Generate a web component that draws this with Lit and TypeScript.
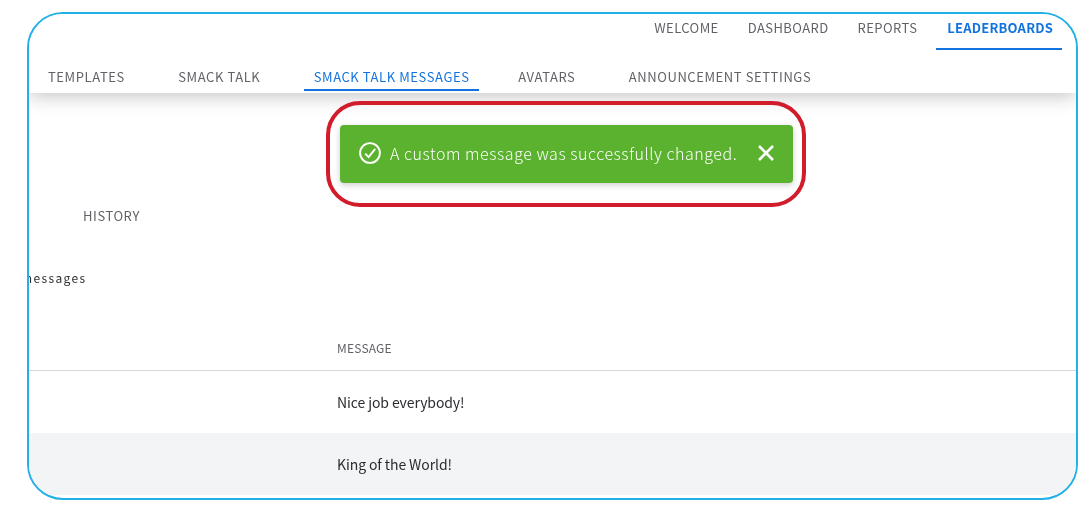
import { LitElement, html, css } from "lit";
import { customElement } from "lit/decorators.js";

@customElement("app-root")
export class AppRoot extends LitElement {
  static styles = css`
    :host { display: block; width: 1089px; height: 512px; background: #fff; overflow: hidden;
      font-family: "Noto Sans CJK SC", "Liberation Sans", sans-serif; padding: 12px 0 0 27px; box-sizing: border-box; }
    .frame { position: relative; width: 1051px; height: 488px; box-sizing: border-box; border: 2px solid #22b0e6;
      border-radius: 36px; overflow: hidden; background: #fff; display: flex; flex-direction: column; }
    header { position: relative; z-index: 1; height: 79px; flex: none; background: #fff; box-shadow: 0 3px 18px rgba(0,0,0,.24); display: flex; flex-direction: column; }
    .nav { display: flex; font-size: 13px; letter-spacing: .58px; color: #616267; white-space: nowrap; will-change: transform; }
    .top { justify-content: flex-end; height: 36px; padding-right: 14px; letter-spacing: .42px; }
    .top a { box-sizing: border-box; height: 36px; line-height: 18px; padding-top: 5px; margin-left: 29px; }
    .top a.on { color: #1273de; font-weight: 700; letter-spacing: .2px; border-bottom: 2px solid #1273de; padding: 5px 9px 0 11px; margin-left: 19px; }
    .sub { margin-top: 13px; padding-left: 9px; gap: 34.4px; }
    .sub a { padding: 0 9px 0 10px; height: 28px; box-sizing: border-box; line-height: 28px; }
    .sub a.on { color: #1273de; border-bottom: 2px solid #1273de; margin-right: -4.6px; }
    .body { flex: 1; display: flex; flex-direction: column; min-height: 0; will-change: transform; }
    .history { font-size: 13px; letter-spacing: .56px; color: #616267; margin: 114px 0 0 54px; line-height: 18px; height: 18px; }
    .messages { font-size: 12px; letter-spacing: 1.35px; color: #2e2f33; line-height: 18px; margin: 44px 0 0 -8px; height: 18px; }
    .th { font-size: 12px; letter-spacing: .2px; color: #616267; padding-left: 308px; margin-top: 53px; line-height: 16px; box-sizing: border-box; border-bottom: 1px solid #d6d7da; height: 31px; }
    .row { height: 62px; font-size: 14px; letter-spacing: -.1px; color: #2b2c30; padding-left: 308px; line-height: 62px; flex: none; }
    .row.alt { background: #f3f4f6; }
    .toast { position: absolute; z-index: 2; left: 311px; top: 111px; width: 453px; height: 58px; background: #5bb22f; border-radius: 4px;
      box-shadow: 0 2px 6px rgba(0,0,0,.2); color: #fff; display: flex; align-items: center; font-size: 16px; font-weight: 300; letter-spacing: .55px; box-sizing: border-box; padding-left: 19px; white-space: nowrap; }
    .toast svg { flex: none; display: block; margin-top: -2px; }
    .toast span { margin: -2px 0 0 9px; will-change: transform; }
    .toast .x { margin-left: 20px; }
    .ring { position: absolute; z-index: 3; left: 297px; top: 87px; width: 480px; height: 106px; box-sizing: border-box; border: 4px solid #d01c2b; border-radius: 34px; pointer-events: none; }
  `;

  render() {
    return html`
      <div class="frame">
        <header>
          <nav class="nav top">
            <a>WELCOME</a><a>DASHBOARD</a><a>REPORTS</a><a class="on">LEADERBOARDS</a>
          </nav>
          <nav class="nav sub">
            <a>TEMPLATES</a><a>SMACK TALK</a><a class="on">SMACK TALK MESSAGES</a><a>AVATARS</a><a>ANNOUNCEMENT SETTINGS</a>
          </nav>
        </header>
        <div class="body">
          <div class="history">HISTORY</div>
          <div class="messages">messages</div>
          <div class="th">MESSAGE</div>
          <div class="row">Nice job everybody!</div>
          <div class="row alt">King of the World!</div>
        </div>
        <div class="toast">
          <svg width="22" height="22" viewBox="0 0 22 22" fill="none" stroke="#fff">
            <circle cx="11" cy="11" r="9.9" stroke-width="1.9"/>
            <path d="M6.2 11.6l3.4 3.5 6.6-8.2" stroke-width="1.9"/>
          </svg>
          <span>A custom message was successfully changed.</span>
          <svg class="x" width="18" height="18" viewBox="0 0 18 18" fill="none" stroke="#fff" stroke-width="2.6">
            <path d="M2 2l14 14M16 2L2 16"/>
          </svg>
        </div>
        <div class="ring"></div>
      </div>
    `;
  }
}
